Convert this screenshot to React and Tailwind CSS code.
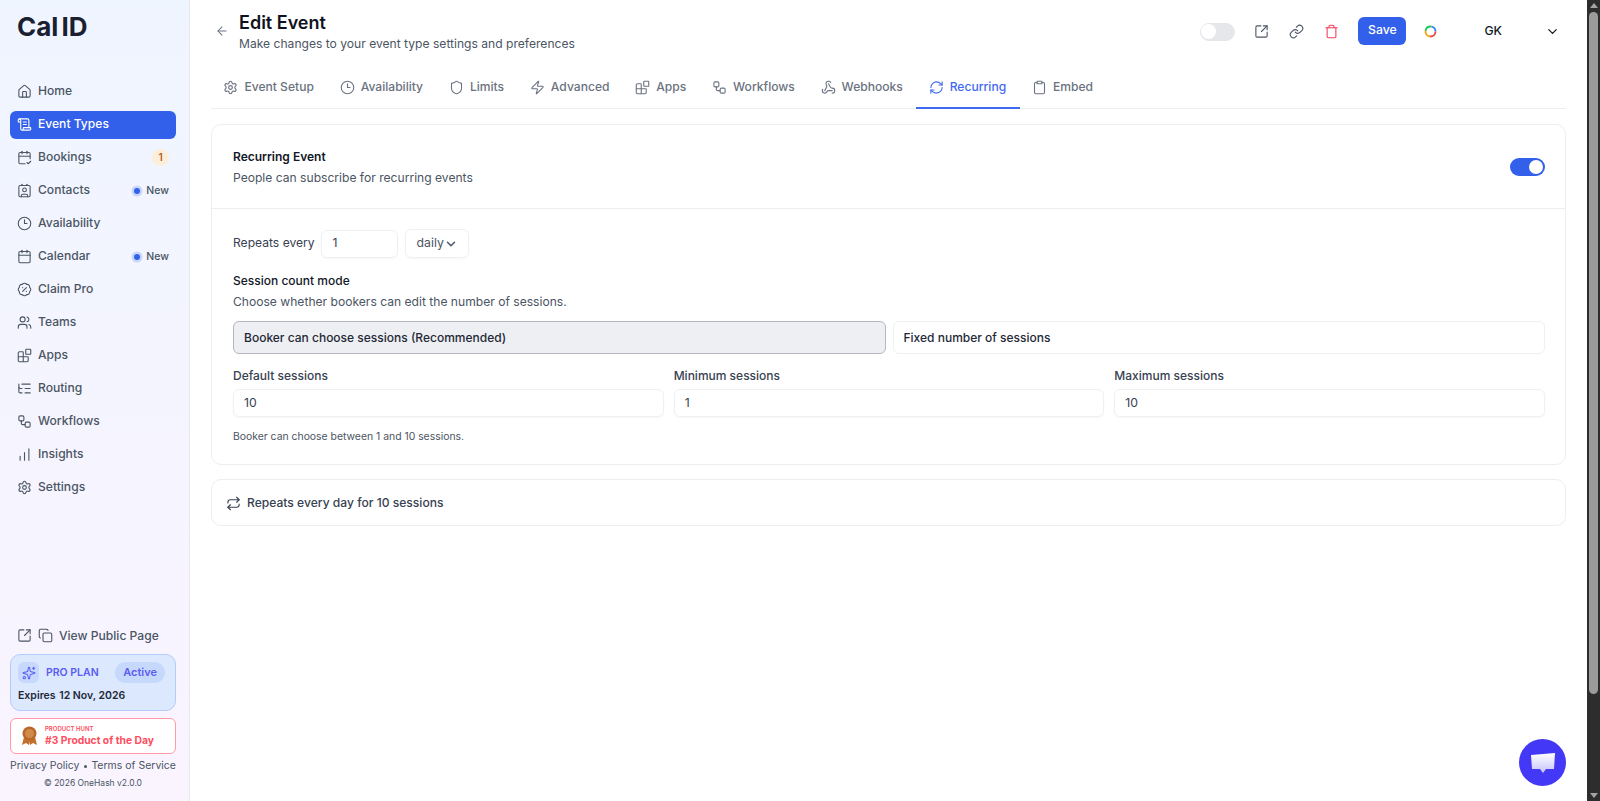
import {
  ArrowLeft,
  Blocks,
  BadgePercent,
  Calendar,
  CalendarCheck2,
  ChartNoAxesColumnIncreasing,
  ChevronDown,
  Clipboard,
  Clock3,
  Contact,
  Copy,
  House,
  Link,
  ListTree,
  RefreshCw,
  Repeat,
  ScrollText,
  Settings,
  Shield,
  Sparkles,
  SquareArrowOutUpRight,
  Trash,
  Users,
  Webhook,
  Workflow,
  Zap,
} from "lucide-react";

const navItems = [
  { label: "Home", icon: House },
  { label: "Event Types", icon: ScrollText, active: true },
  { label: "Bookings", icon: CalendarCheck2, count: "1" },
  { label: "Contacts", icon: Contact, isNew: true },
  { label: "Availability", icon: Clock3 },
  { label: "Calendar", icon: Calendar, isNew: true },
  { label: "Claim Pro", icon: BadgePercent },
  { label: "Teams", icon: Users },
  { label: "Apps", icon: Blocks },
  { label: "Routing", icon: ListTree },
  { label: "Workflows", icon: Workflow },
  { label: "Insights", icon: ChartNoAxesColumnIncreasing },
  { label: "Settings", icon: Settings },
];

const tabs = [
  { label: "Event Setup", icon: Settings },
  { label: "Availability", icon: Clock3 },
  { label: "Limits", icon: Shield },
  { label: "Advanced", icon: Zap },
  { label: "Apps", icon: Blocks },
  { label: "Workflows", icon: Workflow },
  { label: "Webhooks", icon: Webhook },
  { label: "Recurring", icon: RefreshCw, active: true },
  { label: "Embed", icon: Clipboard },
];

const NavItem = ({ item }) => {
  const Icon = item.icon;
  return (
    <div
      className={
        item.active
          ? "flex h-[28px] items-center rounded-md bg-[#3260ea] px-[7px] text-white"
          : "flex h-[28px] items-center rounded-md px-[7px] text-[#4b5563]"
      }>
      <Icon size={15} strokeWidth={1.75} className="mr-[6px] shrink-0" />
      <span className="text-[12.1px] font-medium">{item.label}</span>
      {item.count && (
        <span className="ml-auto flex size-[17px] items-center justify-center rounded-full bg-[#fdeeda] text-[10px] font-semibold text-[#b4622a]">
          {item.count}
        </span>
      )}
      {item.isNew && (
        <span className="ml-auto flex items-center gap-[6px] text-[10.5px] font-medium">
          <span className="size-[6px] rounded-full bg-[#3260ea] ring-[2.5px] ring-[#c9d6fb]"></span>
          New
        </span>
      )}
    </div>
  );
};

const Sidebar = () => (
  <aside className="flex h-full w-[190px] shrink-0 flex-col border-r border-[#e8e8f0] bg-gradient-to-b from-[#eff5ff] to-[#faf4ff] pl-[10px] pr-[13px]">
    <div className="flex h-[77.5px] items-start pl-[7px] pt-[10px] text-[26px] font-bold leading-[34px] text-[#1a2030]">
      Cal<span className="ml-[3px]">ID</span>
    </div>
    <nav className="flex flex-col gap-[5px]">
      {navItems.map((item) => (
        <NavItem key={item.label} item={item} />
      ))}
    </nav>
    <div className="mt-auto flex flex-col">
      <div className="flex items-center pl-[7px] text-[#4b5563]">
        <SquareArrowOutUpRight size={15} strokeWidth={1.75} />
        <Copy size={15} strokeWidth={1.75} className="ml-[6px]" />
        <span className="ml-[6px] text-[12.1px] font-medium">View Public Page</span>
      </div>
      <div className="mt-[9px] h-[57px] rounded-[10px] border border-[#b3cdfb] bg-[#dbe8fe] px-[7px] pt-[7px]">
        <div className="flex items-center">
          <span className="flex size-[21px] items-center justify-center rounded-md bg-[#c6d9fd] text-[#5b5cf0]">
            <Sparkles size={14} strokeWidth={1.75} />
          </span>
          <span className="ml-[7px] text-[10.5px] font-semibold text-[#5b5cf0]">PRO PLAN</span>
          <span className="ml-auto mr-[3px] rounded-full bg-[#c6d9fd] px-[8px] py-[2px] text-[11px] font-semibold text-[#5b5cf0]">
            Active
          </span>
        </div>
        <div className="mt-[5px] text-[10.5px] font-semibold text-[#1f2937]">
          Expires <span className="ml-[1px]">12 Nov, 2026</span>
        </div>
      </div>
      <div className="mt-[7px] flex h-[36px] items-center rounded-md border border-[#ff9aa5] bg-white pl-[10px]">
        <svg width="17" height="20" viewBox="0 0 17 20">
          <path d="M3 11 L1 19 L5 17 L8 19 L9 14 Z" fill="#c2702e" />
          <path d="M14 11 L16 19 L12 17 L9 19 L8 14 Z" fill="#c2702e" />
          <circle cx="8.5" cy="7.5" r="7" fill="#b9682a" />
          <circle cx="8.5" cy="7.5" r="4.5" fill="#d08a4c" />
        </svg>
        <div className="ml-[7px] flex flex-col">
          <span className="text-[6px] font-semibold leading-[8px] text-[#ff4d5e]">PRODUCT HUNT</span>
          <span className="text-[10.3px] font-bold leading-[14px] text-[#ff4d5e]">#3 Product of the Day</span>
        </div>
      </div>
      <div className="mt-[4px] flex items-center justify-between text-[10.5px] leading-[16px] text-[#4b5563]">
        <span>Privacy Policy</span>
        <span className="size-[3px] rounded-full bg-[#4b5563]"></span>
        <span>Terms of Service</span>
      </div>
      <div className="mb-[11px] mt-[2px] text-center text-[8.5px] leading-[14px] text-[#4b5563]">© 2026 OneHash v2.0.0</div>
    </div>
  </aside>
);

const Header = () => (
  <div className="flex h-[62px] items-center">
    <ArrowLeft size={14} strokeWidth={1.75} className="ml-[4px] text-[#6b7280]" />
    <div className="ml-[10px] pt-[1px]">
      <h1 className="text-[18px] font-semibold leading-[24px] text-[#0f1320]">Edit Event</h1>
      <p className="text-[12.1px] leading-[18px] text-[#4b5563]">Make changes to your event type settings and preferences</p>
    </div>
    <div className="ml-auto flex items-center pt-[1px]">
      <div className="flex h-[18px] w-[35px] items-center rounded-full border border-[#e5e7eb] bg-[#e5e7eb]">
        <span className="size-[15px] rounded-full bg-white"></span>
      </div>
      <SquareArrowOutUpRight size={15} strokeWidth={1.75} className="ml-[19px] text-[#4b5563]" />
      <Link size={15} strokeWidth={1.75} className="ml-[20px] text-[#4b5563]" />
      <Trash size={15} strokeWidth={1.75} className="ml-[20px] text-[#f43f5e]" />
      <button className="-mt-[2px] ml-[19px] h-[28px] w-[48px] rounded-md bg-[#3260ea] text-[12.25px] font-medium text-white">Save</button>
      <svg width="13" height="13" viewBox="0 0 13 13" className="ml-[18px]">
        <circle cx="6.5" cy="6.5" r="5" fill="none" stroke="#3b82f6" strokeWidth="1.8" strokeDasharray="8 24" strokeDashoffset="-24" />
        <circle cx="6.5" cy="6.5" r="5" fill="none" stroke="#22c55e" strokeWidth="1.8" strokeDasharray="8 24" strokeDashoffset="-16" />
        <circle cx="6.5" cy="6.5" r="5" fill="none" stroke="#f59e0b" strokeWidth="1.8" strokeDasharray="8 24" strokeDashoffset="-8" />
        <circle cx="6.5" cy="6.5" r="5" fill="none" stroke="#ef4444" strokeWidth="1.8" strokeDasharray="8 24" />
      </svg>
      <span className="ml-[47px] text-[12.25px] font-medium text-[#111827]">GK</span>
      <ChevronDown size={15} strokeWidth={2} className="ml-[43px] mr-[6px] text-[#111827]" />
    </div>
  </div>
);

const Tabs = () => (
  <div className="flex h-[47px] border-b border-[#eceef1]">
    {tabs.map((tab) => {
      const Icon = tab.icon;
      return (
        <div
          key={tab.label}
          className={
            tab.active
              ? "-mb-px flex items-center gap-[6px] border-b-2 border-[#3f6af0] pl-[12.4px] pr-[13.4px] pt-[5px] text-[#3f6af0]"
              : "flex items-center gap-[6px] pl-[12.4px] pr-[13.4px] pt-[4px] text-[#6b7280]"
          }>
          <Icon size={15} strokeWidth={1.75} />
          <span className="text-[12.1px] font-medium">{tab.label}</span>
        </div>
      );
    })}
  </div>
);

const Field = ({ label, value }) => (
  <div className="flex-1">
    <div className="text-[12px] font-medium leading-[18px] text-[#374151]">{label}</div>
    <div className="mt-[4px] flex h-[28px] items-center rounded-md border border-[#eef0f3] pl-[10px] text-[12.25px] text-[#374151] shadow-[0_1px_2px_rgba(0,0,0,0.04)]">
      {value}
    </div>
  </div>
);

const RecurringCard = () => (
  <div className="mt-[15px] rounded-[10px] border border-[#eceef1]">
    <div className="flex h-[84px] items-center justify-between border-b border-[#eceef1] pl-[21px] pr-[20px]">
      <div className="pt-[2px]">
        <div className="text-[12px] font-semibold leading-[20px] text-[#111827]">Recurring Event</div>
        <div className="mt-[1px] text-[12.1px] leading-[20px] text-[#4b5563]">People can subscribe for recurring events</div>
      </div>
      <div className="flex h-[18px] w-[35px] items-center justify-end rounded-full bg-[#3260ea] pr-[2px]">
        <span className="size-[14px] rounded-full bg-white"></span>
      </div>
    </div>
    <div className="pb-[19px] pl-[21px] pr-[20px] pt-[20px]">
      <div className="flex items-center">
        <span className="text-[12.1px] text-[#374151]">Repeats every</span>
        <div className="ml-[6px] flex h-[28px] w-[77px] items-center rounded-md border border-[#eef0f3] pl-[11px] text-[12.25px] text-[#374151] shadow-[0_1px_2px_rgba(0,0,0,0.04)]">
          1
        </div>
        <div className="ml-[7px] flex h-[29px] w-[64px] items-center rounded-md border border-[#eef0f3] pl-[11px] text-[12.25px] text-[#4b5563] shadow-[0_1px_2px_rgba(0,0,0,0.04)]">
          daily
          <ChevronDown size={14} strokeWidth={2.5} />
        </div>
      </div>
      <div className="mt-[13px] text-[12px] font-medium leading-[20px] text-[#111827]">Session count mode</div>
      <div className="mt-[1px] text-[12.1px] leading-[20px] text-[#4b5563]">Choose whether bookers can edit the number of sessions.</div>
      <div className="mt-[9px] flex gap-[7px]">
        <div className="flex h-[33px] flex-1 items-center rounded-md border border-[#b4b7c2] bg-[#eeeff2] pl-[10px] text-[12px] font-medium text-[#1f2937]">
          Booker can choose sessions (Recommended)
        </div>
        <div className="flex h-[33px] flex-1 items-center rounded-md border border-[#eef0f3] pl-[10px] text-[12px] font-medium text-[#1f2937]">
          Fixed number of sessions
        </div>
      </div>
      <div className="mt-[13px] flex gap-[10px]">
        <Field label="Default sessions" value="10" />
        <Field label="Minimum sessions" value="1" />
        <Field label="Maximum sessions" value="10" />
      </div>
      <div className="mt-[12px] text-[10.4px] leading-[16px] text-[#4b5563]">Booker can choose between 1 and 10 sessions.</div>
    </div>
  </div>
);

const App = () => (
  <div className="flex h-screen w-full overflow-hidden bg-white font-['Inter',sans-serif]">
    <Sidebar />
    <main className="relative flex-1 pl-[21px] pr-[21px]">
      <Header />
      <Tabs />
      <RecurringCard />
      <div className="mt-[14px] flex h-[47px] items-center gap-[6px] rounded-[10px] border border-[#eceef1] px-[14px] pt-[1px] text-[#374151]">
        <Repeat size={15} strokeWidth={1.75} />
        <span className="text-[12.1px] font-medium">Repeats every day for 10 sessions</span>
      </div>
      <button className="absolute bottom-[15px] right-[21px] flex size-[47px] items-center justify-center rounded-full bg-[#4338f5]">
        <svg width="26" height="22" viewBox="0 0 26 22">
          <defs>
            <linearGradient id="bubble" x1="0" y1="0" x2="0" y2="1">
              <stop offset="0" stopColor="#ffffff" />
              <stop offset="1" stopColor="#c7c4fa" />
            </linearGradient>
          </defs>
          <path d="M1 3 L25 1 L24 17 L16 17 L13 21 L10 17 L2 17 Z" fill="url(#bubble)" />
        </svg>
      </button>
    </main>
    <div className="flex h-full w-[13px] shrink-0 flex-col items-center bg-[#2d2d2d]">
      <span className="mt-[3px] size-0 border-x-[4px] border-b-[5px] border-x-transparent border-b-[#a3a3a3]"></span>
      <div className="mt-[4px] h-[682px] w-[9px] rounded-full bg-[#9b9b9b]"></div>
      <span className="mb-[3px] mt-auto size-0 border-x-[4px] border-t-[5px] border-x-transparent border-t-[#a3a3a3]"></span>
    </div>
  </div>
);

export default App;
